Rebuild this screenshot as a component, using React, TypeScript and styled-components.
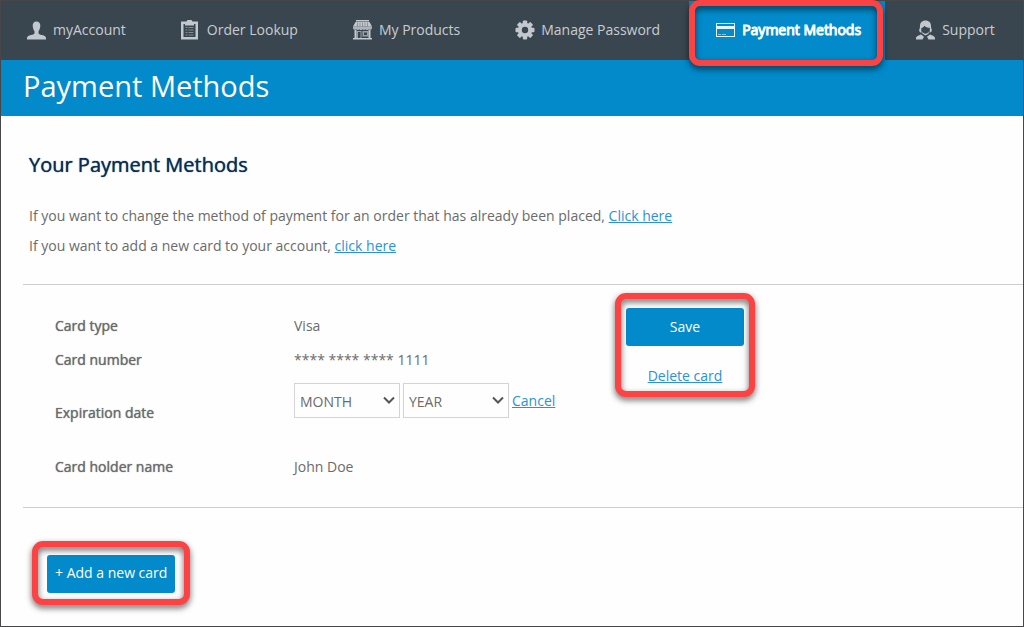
import React from "react";
import styled, { createGlobalStyle, css } from "styled-components";

const BLUE = "#028acb";

const GlobalStyle = createGlobalStyle`
  *, *::before, *::after { box-sizing: border-box; }
  body {
    margin: 0;
    background: #fefefe;
    color: #6b6b6b;
    font: 14px/20px "Open Sans", "Noto Sans", sans-serif;
  }
`;

const heavier = css`
  font-weight: 400;
  text-shadow: 0 0 1px currentColor;
`;

const Page = styled.div`
  min-height: 100vh;
  border: 1px solid #47474a;
`;

const Nav = styled.nav`
  display: flex;
  align-items: stretch;
  gap: 5px;
  height: 59px;
  background: #39464f;
`;

const NavLink = styled.a<{ $active?: boolean }>`
  position: relative;
  display: flex;
  align-items: center;
  gap: 6px;
  padding: 0 24px 2px 26px;
  color: #c9ccd1;
  text-decoration: none;
  white-space: nowrap;

  svg { display: block; flex: none; }

  ${(p) =>
    p.$active &&
    css`
      padding-left: 27px;
      background: ${BLUE};
      color: #fff;
      -webkit-text-stroke: 1px currentColor;
    `}
`;

const Highlight = styled.span<{ $outset: string }>`
  position: absolute;
  inset: ${(p) => p.$outset};
  border: 6px solid #fd4244;
  border-radius: 11px;
  filter: drop-shadow(0 3px 3px rgba(0, 0, 0, 0.6));
  pointer-events: none;
`;

const Banner = styled.header`
  height: 56px;
  padding: 0 22px;
  background: ${BLUE};
`;

const Title = styled.h1`
  margin: 0;
  color: #fff;
  font-size: 29px;
  font-weight: 400;
  line-height: 52px;
`;

const Main = styled.main`
  padding: 33px 0 0 22px;
`;

const Intro = styled.section`
  padding: 0 6px 23px;
`;

const Heading = styled.h2`
  margin: 0 0 20px;
  color: #0a2e52;
  font-size: 20px;
  line-height: 32px;
  ${heavier}
`;

const Line = styled.p`
  margin: 0;
  line-height: 30px;
`;

const Link = styled.a`
  color: #2a93d5;
  text-decoration: underline;
`;

const CardForm = styled.form`
  display: flex;
  align-items: flex-start;
  min-height: 224px;
  padding: 23px 32px;
  border-top: 1px solid #ccc;
  border-bottom: 1px solid #ccc;
`;

const Details = styled.dl`
  display: grid;
  grid-template-columns: 239px 332px;
  grid-template-rows: 36px 32px 74px 34px;
  margin: 0;
`;

const Term = styled.dt`
  align-self: center;
  ${heavier}
`;

const Value = styled.dd`
  display: flex;
  align-items: center;
  gap: 3px;
  margin: 0;
`;

const Expiry = styled(Value)`
  align-self: start;
  padding-top: 7px;
`;

const SelectBox = styled.span`
  position: relative;
  display: flex;

  svg {
    position: absolute;
    right: 5px;
    top: 13px;
    pointer-events: none;
  }
`;

const Select = styled.select`
  width: 106px;
  height: 35px;
  padding: 2px 5px 0;
  border: 1px solid #d4d4d4;
  border-radius: 0;
  background: #fefefe;
  color: #6b6b6b;
  font: inherit;
  appearance: none;
`;

const Actions = styled.div`
  position: relative;
  display: flex;
  flex-direction: column;
  align-items: center;
  gap: 20px;
  width: 118px;
`;

const Button = styled.button`
  height: 38px;
  padding: 0 8px 2px;
  border: 0;
  border-radius: 3px;
  background: ${BLUE};
  color: #fff;
  font: inherit;
  white-space: nowrap;
`;

const SaveButton = styled(Button)`
  width: 100%;
  padding-bottom: 0;
`;

const Footer = styled.div`
  padding: 47px 24px 32px;
`;

const ButtonWrap = styled.div`
  position: relative;
  display: inline-flex;
`;

const iconProps = { width: 20, height: 20, viewBox: "0 0 20 20", fill: "#c3c7ce", "aria-hidden": true };

const UserIcon = () => (
  <svg {...iconProps}>
    <path d="M9.500 1.500c2.600 0 3.800 1.700 3.800 4S12.400 10 11.500 11.200v2c0 .9 1.500 1.300 3.500 1.900 2.700.8 4 1.300 4 3v1.400H0v-1.400c0-1.700 1.300-2.200 4-3 2-.6 3.500-1 3.500-1.900v-2C6.600 10 5.700 7.800 5.700 5.500s1.200-4 3.800-4z" />
  </svg>
);

const ClipboardIcon = () => (
  <svg {...iconProps}>
    <path fillRule="evenodd" d="M0 1.500h5.500l1-1.500h4l1 1.500H17v18H0zM2.500 4v13h12V4H13v1.500H4V4z" />
    <path d="M4.500 7h2v1h-2zm3 0h5v1h-5zM4.500 9.500h2v1h-2zm3 0h5v1h-5zM4.500 12h2v1h-2zm3 0h5v1h-5zM4.500 14.500h2v1h-2zm3 0h5v1h-5z" opacity=".55" />
  </svg>
);

const ShopIcon = () => (
  <svg {...iconProps}>
    <path d="M3 0h13v1.500H3zM2.500 2h14L19 6.500H0z" />
    <path d="M0 6.500h19v1.700a1.900 1.900 0 0 1-3.200 1 1.900 1.900 0 0 1-3.200 0 1.900 1.900 0 0 1-3.100 0 1.900 1.900 0 0 1-3.200 0 1.900 1.900 0 0 1-3.100 0A1.900 1.900 0 0 1 0 8.200z" opacity=".85" />
    <path d="M1.500 10h2v8h12v-8h2v8h1.500v1.500H0V18h1.500z" />
    <path fillRule="evenodd" d="M3.500 11h5v7h-1v-6H5v6H3.500zM9.500 11h6v5.500h-6zM11 12.500V15h3v-2.500z" opacity=".7" />
    <path d="M4.500 2.500v4M7 2.500v4M9.500 2.500v4M12 2.500v4M14.500 2.500v4" stroke="#39464f" strokeWidth=".4" />
  </svg>
);

const GearIcon = () => (
  <svg {...iconProps}>
    {[0, 45, 90, 135].map((angle) => (
      <rect key={angle} x="7.800" y=".5" width="4.400" height="19" rx="1" transform={`rotate(${angle} 10 10)`} />
    ))}
    <circle cx="10" cy="10" r="7.200" />
    <circle cx="10" cy="10" r="3.200" fill="#39464f" />
  </svg>
);

const CardIcon = () => (
  <svg {...iconProps} fill="#fff">
    <path fillRule="evenodd" d="M0 3h19v14H0zM1 4v2h17V4zM1 9v7h17V9z" opacity=".9" />
    <path d="M2 14h3v1H2zm4 0h4v1H6z" opacity=".5" />
  </svg>
);

const SupportIcon = () => (
  <svg {...iconProps}>
    <path d="M9.500.5c3.600 0 5.500 2.300 5.500 5.500 0 1.500.2 2.700.8 3.800.3 1.500-.8 2.700-2.300 2.900 0-.8.300-1.400.3-2.200V7.800C11.500 7.800 9.500 7 8.500 5.700 7.800 7 6.700 7.700 5.300 7.900v2.600c0 .8.200 1.400.4 2.200-1.700-.1-2.900-1.300-2.500-2.900.6-1.100.8-2.300.8-3.800 0-3.200 1.900-5.500 5.500-5.500z" />
    <path d="M6.200 11.500c1 1.500 2 2.200 3.300 2.200s2.300-.7 3.300-2.200l-.3 2.300-3 1.700-3-1.700z" />
    <path d="M5 14.500l3 2.300-1.500 2.700H0v-1.200C0 16 3 15.500 5 14.500zM14 14.500l-3 2.300 1.500 2.700H19v-1.200c0-2.300-3-2.800-5-3.800z" />
  </svg>
);

const Chevron = () => (
  <svg width="12" height="9" viewBox="0 0 12 9" fill="none" stroke="#555" strokeWidth="2" aria-hidden="true">
    <path d="M1 1.500l5 5 5-5" />
  </svg>
);

const NAV = [
  { label: "myAccount", Icon: UserIcon },
  { label: "Order Lookup", Icon: ClipboardIcon },
  { label: "My Products", Icon: ShopIcon },
  { label: "Manage Password", Icon: GearIcon },
  { label: "Payment Methods", Icon: CardIcon, active: true },
  { label: "Support", Icon: SupportIcon },
];

export default function App() {
  return (
    <Page>
      <GlobalStyle />
      <Nav aria-label="Account">
        {NAV.map(({ label, Icon, active }) => (
          <NavLink key={label} href="#" $active={active} aria-current={active ? "page" : undefined}>
            <Icon />
            {label}
            {active && <Highlight $outset="-1px 2px -6px 0" />}
          </NavLink>
        ))}
      </Nav>
      <Banner>
        <Title>Payment Methods</Title>
      </Banner>
      <Main>
        <Intro>
          <Heading>Your Payment Methods</Heading>
          <Line>
            If you want to change the method of payment for an order that has already been placed,{" "}
            <Link href="#">Click here</Link>
          </Line>
          <Line>
            If you want to add a new card to your account, <Link href="#">click here</Link>
          </Line>
        </Intro>
        <CardForm onSubmit={(e) => e.preventDefault()}>
          <Details>
            <Term>Card type</Term>
            <Value>Visa</Value>
            <Term>Card number</Term>
            <Value>**** **** **** 1111</Value>
            <Term>Expiration date</Term>
            <Expiry>
              <SelectBox>
                <Select aria-label="Expiration month">
                  <option>MONTH</option>
                </Select>
                <Chevron />
              </SelectBox>
              <SelectBox>
                <Select aria-label="Expiration year">
                  <option>YEAR</option>
                </Select>
                <Chevron />
              </SelectBox>
              <Link href="#">Cancel</Link>
            </Expiry>
            <Term>Card holder name</Term>
            <Value>John Doe</Value>
          </Details>
          <Actions>
            <SaveButton type="submit">Save</SaveButton>
            <Link href="#">Delete card</Link>
            <Highlight $outset="-15px -11px -11px" />
          </Actions>
        </CardForm>
        <Footer>
          <ButtonWrap>
            <Button type="button">+ Add a new card</Button>
            <Highlight $outset="-14px -15px -12px" />
          </ButtonWrap>
        </Footer>
      </Main>
    </Page>
  );
}
